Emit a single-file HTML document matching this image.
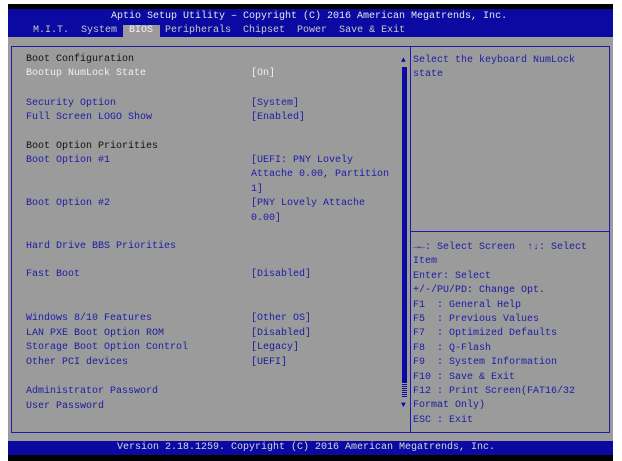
<!DOCTYPE html><html><head><style>
body{margin:0;width:622px;height:461px;background:#fff;position:relative;overflow:hidden;font-family:"Liberation Mono","DejaVu Sans Mono",monospace;font-size:10px;}
div{position:absolute;white-space:pre;line-height:12px;}
.b{color:#1c1ca8}.w{color:#f0f0f0}.k{color:#111}.d{color:#1a1a9a}
</style></head><body>
<div style="left:8px;top:4px;width:605px;height:5px;background:#000"></div>
<div style="left:8px;top:9px;width:605px;height:28px;background:#0a0aa2"></div>
<div style="left:8px;top:37px;width:605px;height:404px;background:#9b9b9b"></div>
<div style="left:8px;top:441px;width:605px;height:14px;background:#0a0aa2"></div>
<div style="left:8px;top:455px;width:605px;height:6px;background:#000"></div>
<div style="left:111px;top:11px;color:#e6e6e6">Aptio Setup Utility – Copyright (C) 2016 American Megatrends, Inc.</div>
<div style="left:123px;top:25px;width:37px;height:12px;background:#9b9b9b"></div>
<div style="left:33px;top:25px;color:#c8c8c8">M.I.T.  System  <span style="color:#f4f4f4">BIOS</span>  Peripherals  Chipset  Power  Save &amp; Exit</div>
<div style="left:11px;top:46px;width:599px;height:387px;border:1px solid #1c1ca8;box-sizing:border-box"></div>
<div style="left:410px;top:46px;width:1px;height:387px;background:#1c1ca8"></div>
<div style="left:411px;top:231px;width:199px;height:1px;background:#1c1ca8"></div>
<div style="left:402px;top:67px;width:5px;height:315px;background:#0a0aa2"></div>
<div style="left:402px;top:382px;width:5px;height:16px;background:repeating-linear-gradient(#0a0aa2 0 1px,#9b9b9b 1px 2px)"></div>
<div style="left:401px;top:55px;font-size:8px;color:#0a0aa2">▲</div>
<div style="left:401px;top:400px;font-size:8px;color:#0a0aa2">▼</div>
<div class="k" style="left:26px;top:54px">Boot Configuration</div>
<div class="w" style="left:26px;top:68px">Bootup NumLock State</div>
<div class="w" style="left:251px;top:68px">[On]</div>
<div class="b" style="left:26px;top:97px;line-height:14.4px">Security Option
Full Screen LOGO Show</div>
<div class="b" style="left:251px;top:97px;line-height:14.4px">[System]
[Enabled]</div>
<div class="k" style="left:26px;top:140px;line-height:14.4px">Boot Option Priorities</div>
<div class="b" style="left:26px;top:154px;line-height:14.4px">Boot Option #1


Boot Option #2</div>
<div class="b" style="left:251px;top:154px;line-height:14.4px">[UEFI: PNY Lovely
Attache 0.00, Partition
1]
[PNY Lovely Attache
0.00]</div>
<div class="b" style="left:26px;top:241px">Hard Drive BBS Priorities</div>
<div class="b" style="left:26px;top:269px">Fast Boot</div>
<div class="b" style="left:251px;top:269px">[Disabled]</div>
<div class="b" style="left:26px;top:312px;line-height:14.5px">Windows 8/10 Features
<span class="d">LAN PXE Boot Option ROM</span>
Storage Boot Option Control
<span class="d">Other PCI devices</span></div>
<div class="b" style="left:251px;top:312px;line-height:14.5px">[Other OS]
<span class="d">[Disabled]
[Legacy]
[UEFI]</span></div>
<div class="b" style="left:26px;top:385px;line-height:14.5px">Administrator Password
<span class="d">User Password</span></div>
<div class="b" style="left:413px;top:54px;line-height:14.4px">Select the keyboard NumLock
state</div>
<div class="b" style="left:413px;top:241px;line-height:14.4px">→←: Select Screen  ↑↓: Select
Item
Enter: Select
<span class="d">+/-/PU/PD: Change Opt.</span>
F1  : General Help
F5  : Previous Values
F7  : Optimized Defaults
F8  : Q-Flash
F9  : System Information
F10 : Save &amp; Exit
F12 : Print Screen(FAT16/32
<span class="d">Format Only)</span>
ESC : Exit</div>
<div style="left:117px;top:442px;color:#d8d8d8">Version 2.18.1259. Copyright (C) 2016 American Megatrends, Inc.</div>
</body></html>
